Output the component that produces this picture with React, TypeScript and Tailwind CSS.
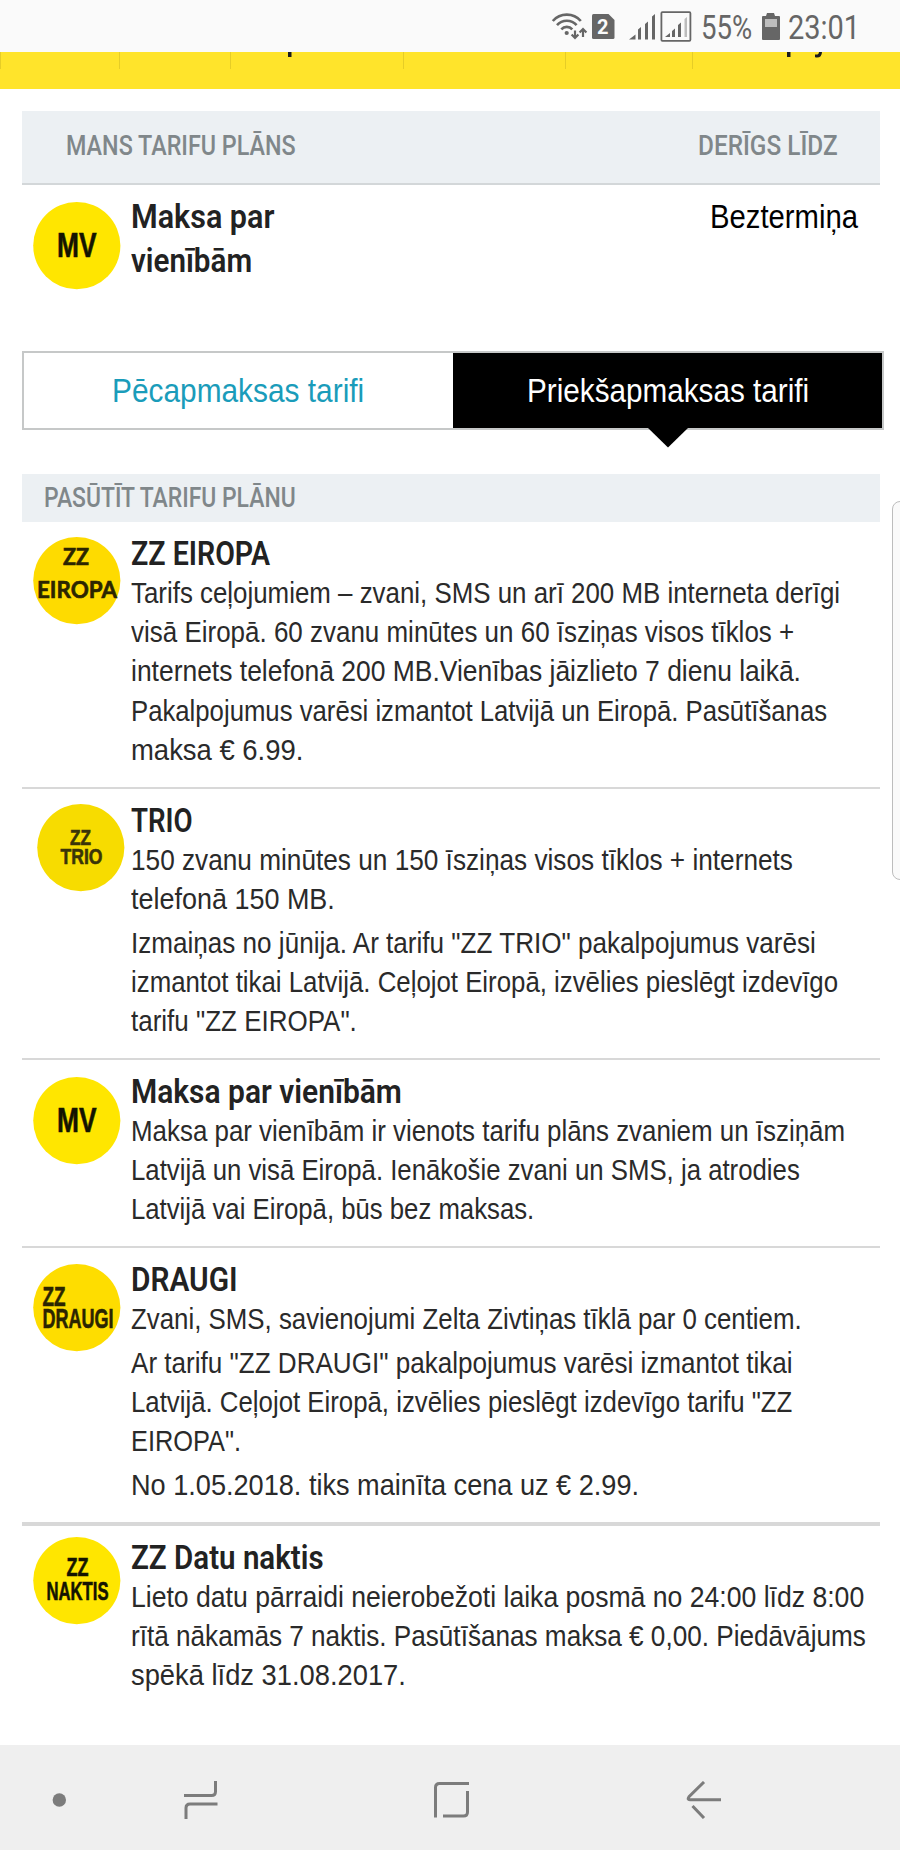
import { useLayoutEffect, useRef, useState } from 'react';
import type { ReactNode } from 'react';

type TextLine = { text: string; width: number };
type BadgeLine = { text: string; x: number; y: number; width: number };

type Plan = {
  id: string;
  title: TextLine;
  paragraphs: TextLine[][];
  rowClass: string;
  badgeClass: string;
  badge: ReactNode;
};

// condensed look: squeezes one line of text to the given width
function Condensed({ text, width, className = '' }: TextLine & { className?: string }) {
  const ref = useRef<HTMLSpanElement>(null);
  const [scale, setScale] = useState(1);

  useLayoutEffect(() => {
    if (ref.current) setScale(width / ref.current.offsetWidth);
  }, [text, width]);

  return (
    <span className={`block whitespace-nowrap ${className}`} style={{ width }}>
      <span ref={ref} className="inline-block origin-left align-top" style={{ transform: `scaleX(${scale})` }}>
        {text}
      </span>
    </span>
  );
}

function Badge({ fill, size, lines, color = '#141400', family = 'Liberation Sans' }: { fill: string; size: number; lines: BadgeLine[]; color?: string; family?: string }) {
  return (
    <svg width="88" height="88" viewBox="0 0 88 88" className="block overflow-visible">
      <circle cx="43.8" cy="43.6" r="43.6" fill={fill} />
      {lines.map((l) => (
        <text key={l.text} x={l.x} y={l.y} fontSize={size} fontWeight="700" fontFamily={`${family}, sans-serif`} fill={color} stroke={color} strokeWidth="0.6" textLength={l.width} lengthAdjust="spacingAndGlyphs">
          {l.text}
        </text>
      ))}
    </svg>
  );
}

const mvBadge = <Badge fill="#ffe600" size={35} lines={[{ text: 'MV', x: 24, y: 55, width: 39.5 }]} />;

const plans: Plan[] = [
  {
    id: 'eiropa',
    title: { text: 'ZZ EIROPA', width: 139 },
    paragraphs: [
      [
        { text: 'Tarifs ceļojumiem – zvani, SMS un arī 200 MB interneta derīgi', width: 709 },
        { text: 'visā Eiropā. 60 zvanu minūtes un 60 īsziņas visos tīklos +', width: 663 },
        { text: 'internets telefonā 200 MB.Vienības jāizlieto 7 dienu laikā.', width: 670 },
        { text: 'Pakalpojumus varēsi izmantot Latvijā un Eiropā. Pasūtīšanas', width: 696 },
        { text: 'maksa € 6.99.', width: 172 },
      ],
    ],
    rowClass: 'h-[267px] border-b-2',
    badgeClass: 'ml-[11px] mt-[15px]',
    badge: (
      <Badge fill="#fedb00" size={23} family="Lato" color="#2b2500" lines={[{ text: 'ZZ', x: 30, y: 28, width: 26 }, { text: 'EIROPA', x: 4, y: 61, width: 80 }]} />
    ),
  },
  {
    id: 'trio',
    title: { text: 'TRIO', width: 62 },
    paragraphs: [
      [
        { text: '150 zvanu minūtes un 150 īsziņas visos tīklos + internets', width: 662 },
        { text: 'telefonā 150 MB.', width: 204 },
      ],
      [
        { text: 'Izmaiņas no jūnija. Ar tarifu "ZZ TRIO" pakalpojumus varēsi', width: 685 },
        { text: 'izmantot tikai Latvijā. Ceļojot Eiropā, izvēlies pieslēgt izdevīgo', width: 707 },
        { text: 'tarifu "ZZ EIROPA".', width: 226 },
      ],
    ],
    rowClass: 'h-[271px] border-b-2',
    badgeClass: 'ml-[15px] mr-[-4px] mt-[15px]',
    badge: (
      <Badge fill="#f7dc00" size={21.5} color="#3a3408" lines={[{ text: 'ZZ', x: 33, y: 40.5, width: 21 }, { text: 'TRIO', x: 23.5, y: 59.5, width: 42 }]} />
    ),
  },
  {
    id: 'mv',
    title: { text: 'Maksa par vienībām', width: 271 },
    paragraphs: [
      [
        { text: 'Maksa par vienībām ir vienots tarifu plāns zvaniem un īsziņām', width: 714 },
        { text: 'Latvijā un visā Eiropā. Ienākošie zvani un SMS, ja atrodies', width: 669 },
        { text: 'Latvijā vai Eiropā, būs bez maksas.', width: 403 },
      ],
    ],
    rowClass: 'h-[188px] border-b-2',
    badgeClass: 'ml-[11px] mt-[17px]',
    badge: mvBadge,
  },
  {
    id: 'draugi',
    title: { text: 'DRAUGI', width: 107 },
    paragraphs: [
      [{ text: 'Zvani, SMS, savienojumi Zelta Zivtiņas tīklā par 0 centiem.', width: 671 }],
      [
        { text: 'Ar tarifu "ZZ DRAUGI" pakalpojumus varēsi izmantot tikai', width: 662 },
        { text: 'Latvijā. Ceļojot Eiropā, izvēlies pieslēgt izdevīgo tarifu "ZZ', width: 661 },
        { text: 'EIROPA".', width: 110 },
      ],
      [{ text: 'No 1.05.2018. tiks mainīta cena uz € 2.99.', width: 508 }],
    ],
    rowClass: 'h-[278px] border-b-4',
    badgeClass: 'ml-[11px] mt-[16px]',
    badge: (
      <Badge fill="#fedd00" size={27} color="#2b2500" lines={[{ text: 'ZZ', x: 9.5, y: 42, width: 23 }, { text: 'DRAUGI', x: 9.5, y: 64, width: 71 }]} />
    ),
  },
  {
    id: 'naktis',
    title: { text: 'ZZ Datu naktis', width: 193 },
    paragraphs: [
      [
        { text: 'Lieto datu pārraidi neierobežoti laika posmā no 24:00 līdz 8:00', width: 733 },
        { text: 'rītā nākamās 7 naktis. Pasūtīšanas maksa € 0,00. Piedāvājums', width: 735 },
        { text: 'spēkā līdz 31.08.2017.', width: 275 },
      ],
    ],
    rowClass: 'h-[219px]',
    badgeClass: 'ml-[11px] mt-[11px]',
    badge: (
      <Badge fill="#ffe600" size={26} lines={[{ text: 'ZZ', x: 33.5, y: 38.5, width: 22 }, { text: 'NAKTIS', x: 13.5, y: 62.5, width: 62 }]} />
    ),
  },
];

function StatusBar() {
  return (
    <div className="flex h-[52px] items-start bg-[#fafafa] font-[Roboto,sans-serif] text-[33px] leading-[38px] text-[#666]">
      <svg width="142" height="44" viewBox="550 0 142 44" className="ml-[550px] block shrink-0">
        <g fill="none" stroke="#666" strokeWidth="2.6">
          <path d="M552.8 21a18.5 18.5 0 0 1 28 0" />
          <path d="M557 25.2a13 13 0 0 1 19.6 0" />
          <path d="M561.3 29.3a7.4 7.4 0 0 1 11 0" />
          <path d="M575 30.5v7M571.6 34.4l3.4 3.5 3.4-3.5M583 37v-7M579.6 32.6l3.4-3.5 3.4 3.5" strokeWidth="2.2" />
        </g>
        <circle cx="566.7" cy="33" r="2.1" fill="#666" />
        <path d="M593.5 14h15l6 6v17.5a1.5 1.5 0 0 1-1.5 1.5h-19.5a1.5 1.5 0 0 1-1.5-1.5v-22a1.5 1.5 0 0 1 1.5-1.5z" fill="#666" />
        <text x="597" y="34" fontSize="20" fontWeight="700" fontFamily="Roboto, sans-serif" fill="#fafafa">2</text>
        <path d="M629 39.5l6.5-5v5zM638 39.5v-10l3-2.5v12.5zM645 39.5v-15.5l3-2.5v18zM652 39.5v-23l3-2.5v25.5z" fill="#666" />
        <rect x="661.4" y="12.2" width="29" height="28.6" rx="1" fill="none" stroke="#666" strokeWidth="1.8" />
        <path d="M665 37l5-4v4zM672 37v-6l3-2.5v8.5zM678 37v-12l3-2.5v14.5z" fill="#666" />
        <path d="M684.5 37v-18l2.5-2v20z" fill="#bcbcbc" />
      </svg>
      <Condensed text="55%" width={51} className="ml-[9px] mt-[9px]" />
      <svg width="18" height="28" viewBox="0 0 18 28" className="ml-[10px] mt-[13px] block">
        <path d="M5 0h7l1 3h4q1 0 1 1v22q0 1-1 1H1q-1 0-1-1V4q0-1 1-1h3z" fill="#666" />
        <path d="M3 6h12v8H3z" fill="#bdbdbd" />
      </svg>
      <Condensed text="23:01" width={72} className="ml-[8px] mt-[9px]" />
    </div>
  );
}

function MenuStrip() {
  return (
    <div className="flex h-[37px] items-start bg-[#ffe42b]">
      <div className="h-[17px] w-[119px] border-l border-[#e6cd26]" />
      <div className="h-[17px] w-[111px] border-l border-[#e6cd26]" />
      <div className="h-[17px] w-[173px] border-l border-[#e6cd26]">
        <svg width="4" height="5" className="ml-[57px] block">
          <path d="M0 0h3.5v5H0z" fill="#1c1c1c" />
        </svg>
      </div>
      <div className="h-[17px] w-[162px] border-l border-[#e6cd26]" />
      <div className="h-[17px] w-[127px] border-l border-[#e6cd26]" />
      <div className="h-[17px] flex-1 border-l border-[#e6cd26]">
        <svg width="36" height="6" className="ml-[93px] block">
          <path d="M1 0h3.5v5H1zM36 0q-.2 5.5-5 5.5-1.5 0-2-.5V2.5q4 .5 4-2.5z" fill="#1c1c1c" />
        </svg>
      </div>
    </div>
  );
}

function NavBar() {
  return (
    <div className="flex h-[105px] items-center bg-[#efefef] pt-[5px]">
      <svg width="14" height="14" className="ml-[52px] block">
        <circle cx="7.3" cy="7" r="6.7" fill="#7c7c7c" />
      </svg>
      <svg width="34" height="38" viewBox="184 1781 34 38" className="ml-[118px] block" fill="none" stroke="#7c7c7c" strokeWidth="3">
        <path d="M184 1795.5h27.5q4 0 4-4V1781M217.5 1804H190q-4 0-4 4v11" />
      </svg>
      <svg width="36" height="38" viewBox="434 1781 36 38" className="ml-[216px] block" fill="none" stroke="#7c7c7c" strokeWidth="3">
        <path d="M435.5 1817.5V1787.5q0-4 4-4H469M443 1816h20.5q4 0 4-4V1791" />
      </svg>
      <svg width="36" height="38" viewBox="686 1781 36 38" className="ml-[216px] block" fill="none" stroke="#7c7c7c" strokeWidth="3">
        <path d="M704 1782l-15 14.8q-2 3 1 3H721M692.5 1806l11.5 12" />
      </svg>
    </div>
  );
}

function PlanRow({ plan }: { plan: Plan }) {
  return (
    <div className={`flex border-[#d8d8d8] ${plan.rowClass}`}>
      <div className={`w-[98px] shrink-0 ${plan.badgeClass}`}>{plan.badge}</div>
      <div className="pt-[12px]">
        <Condensed {...plan.title} className="-mb-px font-[Roboto,sans-serif] text-[33.5px] font-semibold leading-[40px] text-[#222]" />
        <div className="space-y-[4.5px] text-[30px] leading-[39.2px] text-[#2a2a2a]">
          {plan.paragraphs.map((lines, i) => (
            <div key={i}>
              {lines.map((l) => (
                <Condensed key={l.text} {...l} />
              ))}
            </div>
          ))}
        </div>
      </div>
    </div>
  );
}

export default function App() {
  return (
    <div className="relative h-[1850px] w-[900px] overflow-hidden bg-white font-['Liberation_Sans',Arial,sans-serif]">
      <StatusBar />
      <MenuStrip />

      <div className="ml-[22px] mt-[22px] w-[858px]">
        <div className="flex h-[74px] justify-between border-b-2 border-[#d3d7d9] bg-[#ecf0f3] pl-[44px] pr-[42px] pt-[16px] font-[Roboto,sans-serif] text-[28px] font-medium leading-[38px] text-[#80878a]">
          <Condensed text="MANS TARIFU PLĀNS" width={230} />
          <Condensed text="DERĪGS LĪDZ" width={140} />
        </div>
        <div className="flex h-[166px]">
          <div className="ml-[11px] mt-[17px] w-[98px]">{mvBadge}</div>
          <div className="pt-[10px] font-[Roboto,sans-serif] text-[33.5px] font-semibold leading-[43.5px] text-[#222]">
            <Condensed text="Maksa par" width={143} />
            <Condensed text="vienībām" width={121} />
          </div>
          <Condensed text="Beztermiņa" width={148} className="ml-auto mr-[22px] pt-[10px] text-[34px] leading-[43.5px] text-black" />
        </div>

        <div className="flex h-[79px] w-[862px] border-2 border-[#c6c8c8] text-[34px] leading-[74px]">
          <div className="flex w-[429px] justify-center pr-[2px] text-[#1a9cba]">
            <Condensed text="Pēcapmaksas tarifi" width={252} />
          </div>
          <div className="relative flex flex-1 justify-center bg-black text-white">
            <Condensed text="Priekšapmaksas tarifi" width={282} />
            <svg width="42" height="21" className="absolute left-[194px] top-[74px] block">
              <path d="M0 0h42L21 20.5z" fill="#000" />
            </svg>
          </div>
        </div>

        <div className="mt-[44px] h-[48px] bg-[#ecf0f3] pl-[22px] pt-[5px] font-[Roboto,sans-serif] text-[28px] font-medium leading-[38px] text-[#80878a]">
          <Condensed text="PASŪTĪT TARIFU PLĀNU" width={252} />
        </div>

        {plans.map((p) => (
          <PlanRow key={p.id} plan={p} />
        ))}
      </div>

      <NavBar />

      {/* edge panel handle */}
      <div className="absolute left-[892px] top-[501px] h-[379px] w-[20px] rounded-lg border border-[#bdbdbd] bg-[#fafafa]" />
    </div>
  );
}
